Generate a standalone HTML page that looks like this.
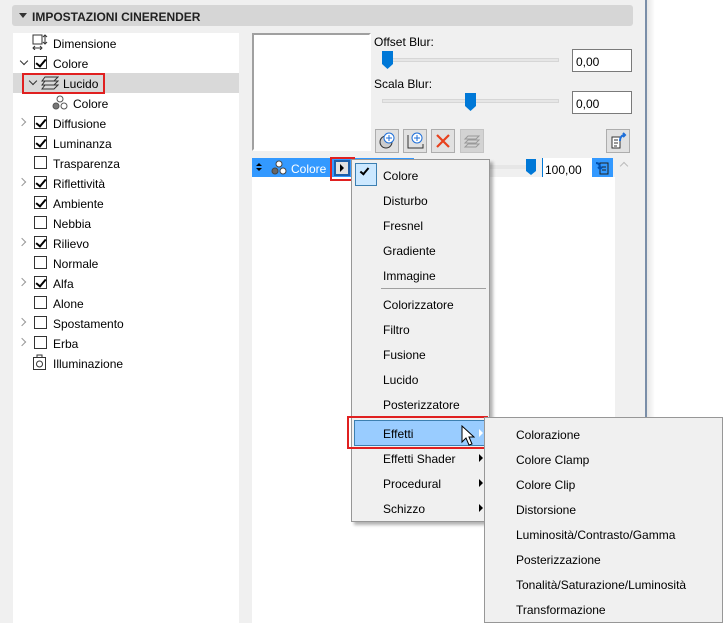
<!DOCTYPE html>
<html><head><meta charset="utf-8"><style>
*{margin:0;padding:0;box-sizing:border-box}
body{width:723px;height:623px;overflow:hidden;background:#fff;font-family:"Liberation Sans",sans-serif;font-size:12px;color:#000;position:relative}
.a{position:absolute}
.t{position:absolute;white-space:nowrap;line-height:14px;margin-top:1px}
.cb{position:absolute;width:13px;height:13px;border:1px solid #333;background:#fff}
.cb.c::after{content:"";position:absolute;left:3px;top:0px;width:4px;height:8px;border:solid #000;border-width:0 2px 2px 0;transform:rotate(40deg)}
.chev{position:absolute;width:6px;height:6px;border:solid #999;border-width:0 1.5px 1.5px 0;transform:rotate(-45deg)}
.chd{position:absolute;width:6px;height:6px;border:solid #333;border-width:0 1.5px 1.5px 0;transform:rotate(45deg)}
.btn{position:absolute;width:24px;height:24px;background:#e1e1e1;border:1px solid #adadad}
.arr{position:absolute;width:0;height:0;border-left:4px solid #000;border-top:4px solid transparent;border-bottom:4px solid transparent}
</style></head><body>
<div class="a" style="left:0;top:0;width:645px;height:623px;background:#f0f0f0"></div>
<div class="a" style="left:645px;top:0;width:2px;height:623px;background:#7a8ea8"></div>
<div class="a" style="left:647px;top:0;width:8px;height:623px;background:linear-gradient(90deg,#e6e6e6,#fff)"></div>
<div class="a" style="left:12px;top:5px;width:621px;height:21px;background:#d6d6d6;border-radius:3px"></div>
<div class="a" style="left:19px;top:13px;border-top:5px solid #333;border-left:4px solid transparent;border-right:4px solid transparent"></div>
<div class="t" style="left:32px;top:9px;font-weight:bold;font-size:12px;color:#222">IMPOSTAZIONI CINERENDER</div>
<div class="a" style="left:13px;top:33px;width:226px;height:590px;background:#fff"></div>
<div class="a" style="left:13px;top:73px;width:226px;height:20px;background:#d9d9d9"></div>
<div class="a" style="left:22px;top:73px;width:83px;height:21px;border:2px solid #e02020"></div>
<svg class="a" style="left:32px;top:34px" width="16" height="16"><rect x="1" y="1" width="9" height="9" fill="none" stroke="#333"/><path d="M13 1v9M11 3l2-2 2 2M11 8l2 2 2-2M1 14h9M3 12l-2 2 2 2M8 12l2 2-2 2" stroke="#333" fill="none"/></svg>
<div class="t" style="left:53px;top:36px">Dimensione</div>
<div class="chd" style="left:21px;top:58px"></div><div class="cb c" style="left:34px;top:56px"></div><div class="t" style="left:53px;top:56px">Colore</div>
<div class="chd" style="left:30px;top:78px"></div>
<svg class="a" style="left:41px;top:76px" width="18" height="14"><path d="M4 1h13l-4 4H1zM4 5h13l-4 4H1zM4 9h13l-4 4H1z" fill="none" stroke="#333"/></svg>
<div class="t" style="left:63px;top:76px">Lucido</div>
<svg class="a" style="left:52px;top:95px" width="16" height="16"><circle cx="8" cy="4" r="3" fill="#fff" stroke="#555"/><circle cx="4" cy="11" r="3" fill="#777" stroke="#555"/><circle cx="12" cy="11" r="3" fill="#fff" stroke="#555"/></svg>
<div class="t" style="left:73px;top:96px">Colore</div>
<div class="chev" style="left:19px;top:119px"></div><div class="cb c" style="left:34px;top:116px"></div><div class="t" style="left:53px;top:116px">Diffusione</div>
<div class="cb c" style="left:34px;top:136px"></div><div class="t" style="left:53px;top:136px">Luminanza</div>
<div class="cb" style="left:34px;top:156px"></div><div class="t" style="left:53px;top:156px">Trasparenza</div>
<div class="chev" style="left:19px;top:179px"></div><div class="cb c" style="left:34px;top:176px"></div><div class="t" style="left:53px;top:176px">Riflettività</div>
<div class="cb c" style="left:34px;top:196px"></div><div class="t" style="left:53px;top:196px">Ambiente</div>
<div class="cb" style="left:34px;top:216px"></div><div class="t" style="left:53px;top:216px">Nebbia</div>
<div class="chev" style="left:19px;top:239px"></div><div class="cb c" style="left:34px;top:236px"></div><div class="t" style="left:53px;top:236px">Rilievo</div>
<div class="cb" style="left:34px;top:256px"></div><div class="t" style="left:53px;top:256px">Normale</div>
<div class="chev" style="left:19px;top:279px"></div><div class="cb c" style="left:34px;top:276px"></div><div class="t" style="left:53px;top:276px">Alfa</div>
<div class="cb" style="left:34px;top:296px"></div><div class="t" style="left:53px;top:296px">Alone</div>
<div class="chev" style="left:19px;top:319px"></div><div class="cb" style="left:34px;top:316px"></div><div class="t" style="left:53px;top:316px">Spostamento</div>
<div class="chev" style="left:19px;top:339px"></div><div class="cb" style="left:34px;top:336px"></div><div class="t" style="left:53px;top:336px">Erba</div>
<svg class="a" style="left:33px;top:354px" width="14" height="16"><rect x="0.5" y="3.5" width="12" height="12" fill="none" stroke="#333"/><path d="M4 3V1h5v2" fill="none" stroke="#333"/><circle cx="6.5" cy="10" r="3" fill="none" stroke="#333"/></svg>
<div class="t" style="left:53px;top:356px">Illuminazione</div>
<div class="a" style="left:252px;top:33px;width:119px;height:118px;background:#fff;border:2px solid #a0a0a0;border-right-color:#fff;border-bottom-color:#fff"></div>
<div class="t" style="left:374px;top:34px">Offset Blur:</div>
<div class="a" style="left:382px;top:58px;width:177px;height:4px;background:#e6e6e6;border:1px solid #d6d6d6"></div>
<svg class="a" style="left:382px;top:51px" width="11" height="19"><path d="M0 0h11v13l-5.5 5L0 13z" fill="#0078d7"/></svg>
<div class="a" style="left:572px;top:49px;width:60px;height:23px;background:#fff;border:1px solid #7a7a7a"></div>
<div class="t" style="left:576px;top:54px">0,00</div>
<div class="t" style="left:374px;top:76px">Scala Blur:</div>
<div class="a" style="left:382px;top:99px;width:177px;height:4px;background:#e6e6e6;border:1px solid #d6d6d6"></div>
<svg class="a" style="left:465px;top:93px" width="11" height="19"><path d="M0 0h11v13l-5.5 5L0 13z" fill="#0078d7"/></svg>
<div class="a" style="left:572px;top:91px;width:60px;height:23px;background:#fff;border:1px solid #7a7a7a"></div>
<div class="t" style="left:576px;top:96px">0,00</div>
<div class="btn" style="left:375px;top:129px"><svg width="22" height="22"><circle cx="10" cy="12" r="6" fill="#ccc" stroke="#333"/><circle cx="13" cy="8" r="5" fill="#fff" stroke="#1e6fd9"/><path d="M13 5v6M10 8h6" stroke="#1e6fd9"/></svg></div>
<div class="btn" style="left:403px;top:129px"><svg width="22" height="22"><path d="M4 5v13h15v-4" fill="none" stroke="#333"/><circle cx="13" cy="8" r="5" fill="#fff" stroke="#1e6fd9"/><path d="M13 5v6M10 8h6" stroke="#1e6fd9"/></svg></div>
<div class="btn" style="left:431px;top:129px"><svg width="22" height="22"><path d="M5 5l12 12M17 5L5 17" stroke="#e8401c" stroke-width="2.2"/></svg></div>
<div class="btn" style="left:460px;top:129px;background:#d3d3d3;border-color:#c4c4c4"><svg width="22" height="22"><path d="M7 6h11l-3 3H4zM7 10h11l-3 3H4zM7 14h11l-3 3H4z" fill="none" stroke="#999"/></svg></div>
<div class="btn" style="left:606px;top:129px"><svg width="22" height="22"><path d="M5 7h8v11H5z" fill="#fff" stroke="#333"/><path d="M7 10h4M7 13h4M7 16h3" stroke="#333"/><path d="M13 11c0-4 2-6 5-6M16 3l2 2-2 2" stroke="#1e6fd9" stroke-width="2" fill="none"/></svg></div>
<div class="a" style="left:252px;top:177px;width:363px;height:446px;background:#fff"></div>
<div class="a" style="left:252px;top:158px;width:162px;height:19px;background:#3399ff"></div>
<div class="a" style="left:414px;top:165px;width:120px;height:4px;background:#e6e6e6"></div>
<svg class="a" style="left:526px;top:159px" width="10" height="17"><path d="M0 0h10v12l-5 4L0 12z" fill="#0078d7"/></svg>
<div class="a" style="left:542px;top:158px;width:50px;height:19px;background:#fff;border-left:1px solid #0078d7"></div>
<div class="t" style="left:545px;top:162px">100,00</div>
<div class="a" style="left:592px;top:158px;width:21px;height:19px;background:#3399ff"><svg width="21" height="19"><path d="M8 5h8v11H8z" fill="none" stroke="#222"/><path d="M10 9h4M10 12h4" stroke="#222"/><path d="M4 5c3 0 4 2 4 5M6 9l2 2 2-2" stroke="#0050b0" stroke-width="2" fill="none"/></svg></div>
<div class="a" style="left:621px;top:163px;width:6px;height:6px;border:solid #bbb;border-width:1.5px 0 0 1.5px;transform:rotate(45deg)"></div>
<div class="a" style="left:256px;top:163px;border-bottom:3px solid #000;border-left:3px solid transparent;border-right:3px solid transparent"></div>
<div class="a" style="left:256px;top:168px;border-top:3px solid #000;border-left:3px solid transparent;border-right:3px solid transparent"></div>
<svg class="a" style="left:271px;top:160px" width="16" height="16"><circle cx="8" cy="4" r="3" fill="#fff" stroke="#444"/><circle cx="4" cy="11" r="3" fill="#666" stroke="#444"/><circle cx="12" cy="11" r="3" fill="#fff" stroke="#444"/></svg>
<div class="t" style="left:291px;top:161px;color:#fff">Colore</div>
<div class="a" style="left:330px;top:157px;width:25px;height:24px;border:2px solid #e02020"></div>
<div class="a" style="left:334px;top:160px;width:16px;height:16px;background:#e1e1e1;border:2px solid #1e5fa8"></div>
<div class="arr" style="left:340px;top:164px"></div>
<div class="a" style="left:351px;top:159px;width:139px;height:363px;background:#f0f0f0;border:1px solid #979797;box-shadow:3px 3px 3px rgba(0,0,0,.3)"></div>
<div class="a" style="left:355px;top:163px;width:22px;height:23px;background:#cce8ff;border:1px solid #3c7fb1"></div>
<div class="a" style="left:362px;top:166px;width:5px;height:9px;border:solid #000;border-width:0 2px 2px 0;transform:rotate(40deg)"></div>
<div class="t" style="left:383px;top:168px">Colore</div>
<div class="t" style="left:383px;top:193px">Disturbo</div>
<div class="t" style="left:383px;top:218px">Fresnel</div>
<div class="t" style="left:383px;top:243px">Gradiente</div>
<div class="t" style="left:383px;top:268px">Immagine</div>
<div class="a" style="left:381px;top:288px;width:105px;height:1px;background:#a0a0a0"></div>
<div class="t" style="left:383px;top:297px">Colorizzatore</div>
<div class="t" style="left:383px;top:322px">Filtro</div>
<div class="t" style="left:383px;top:347px">Fusione</div>
<div class="t" style="left:383px;top:372px">Lucido</div>
<div class="t" style="left:383px;top:397px">Posterizzatore</div>
<div class="a" style="left:354px;top:420px;width:133px;height:26px;background:#99ccff;border:1px solid #3c7fb1"></div>
<div class="a" style="left:347px;top:416px;width:141px;height:33px;border:2px solid #e02020"></div>
<div class="t" style="left:383px;top:426px">Effetti</div>
<div class="arr" style="left:479px;top:429px;border-left-color:#fff"></div>
<svg class="a" style="left:461px;top:425px" width="14" height="22"><path d="M1 1v16l4-4 3 7 3-1-3-7h5z" fill="#fff" stroke="#000"/></svg>
<div class="t" style="left:383px;top:451px">Effetti Shader</div><div class="arr" style="left:479px;top:454px"></div>
<div class="t" style="left:383px;top:476px">Procedural</div><div class="arr" style="left:479px;top:479px"></div>
<div class="t" style="left:383px;top:501px">Schizzo</div><div class="arr" style="left:479px;top:504px"></div>
<div class="a" style="left:484px;top:417px;width:239px;height:206px;background:#f0f0f0;border:1px solid #979797"></div>
<div class="t" style="left:516px;top:427px">Colorazione</div>
<div class="t" style="left:516px;top:452px">Colore Clamp</div>
<div class="t" style="left:516px;top:477px">Colore Clip</div>
<div class="t" style="left:516px;top:502px">Distorsione</div>
<div class="t" style="left:516px;top:527px">Luminosità/Contrasto/Gamma</div>
<div class="t" style="left:516px;top:552px">Posterizzazione</div>
<div class="t" style="left:516px;top:577px">Tonalità/Saturazione/Luminosità</div>
<div class="t" style="left:516px;top:602px">Transformazione</div>
</body></html>
